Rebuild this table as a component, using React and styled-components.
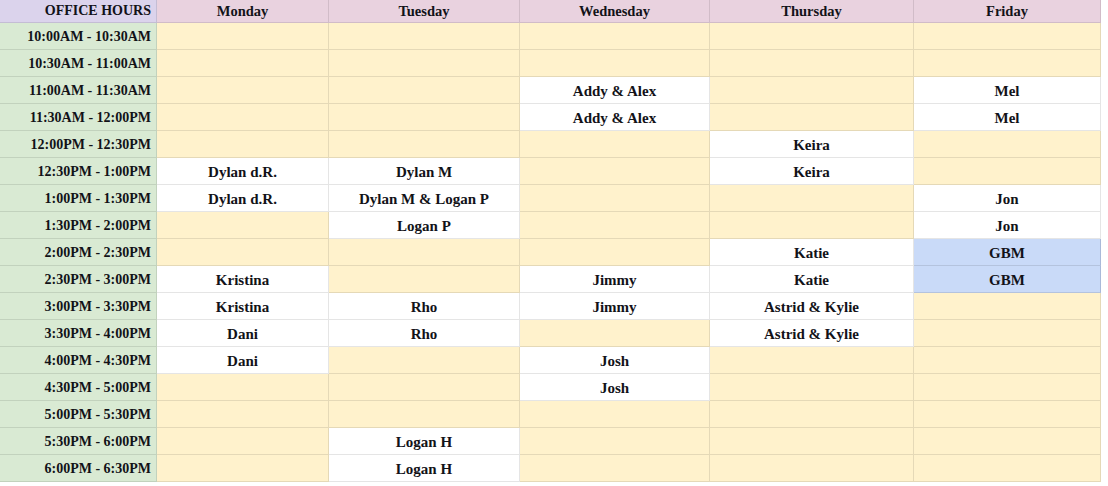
import React from 'react'
import styled, { createGlobalStyle } from 'styled-components'

const GlobalStyle = createGlobalStyle`
  body {
    margin: 0;
    background: #ffffff;
    font-family: 'Liberation Serif', 'Times New Roman', serif;
  }
`;

const Sheet = styled.div`
  display: grid;
  grid-template-columns: 157px 172px 191px 190px 204px 187px;
  grid-template-rows: 23px;
  grid-auto-rows: 27px;
  width: max-content;
  color: #121218;
  font-weight: 700;
  font-size: 14px;
`;

const fills = {
  corner: '#dbd3ec',
  day: '#e9d2df',
  time: '#d9ead3',
  free: '#fff2cc',
  taken: '#ffffff',
  event: '#c9daf8',
};

const Cell = styled.div`
  display: flex;
  align-items: center;
  justify-content: ${p => (p.$align === 'right' ? 'flex-end' : 'center')};
  padding: ${p => (p.$head ? '0' : '2px 0 0')};
  padding-right: ${p => (p.$align === 'right' ? '5px' : '0')};
  font-size: ${p => (p.$align === 'right' ? '14px' : p.$head ? '14.5px' : '15px')};
  background: ${p => fills[p.$kind]};
  border-right: 1px solid ${p => (p.$kind === 'event' ? 'rgba(60,70,110,0.22)' : 'rgba(0,0,0,0.1)')};
  border-bottom: 1px solid rgba(0,0,0,0.1);
  box-sizing: border-box;
  white-space: nowrap;
  line-height: 1;
`;

const days = ['Monday', 'Tuesday', 'Wednesday', 'Thursday', 'Friday'];

const times = [
  '10:00AM - 10:30AM',
  '10:30AM - 11:00AM',
  '11:00AM - 11:30AM',
  '11:30AM - 12:00PM',
  '12:00PM - 12:30PM',
  '12:30PM - 1:00PM',
  '1:00PM - 1:30PM',
  '1:30PM - 2:00PM',
  '2:00PM - 2:30PM',
  '2:30PM - 3:00PM',
  '3:00PM - 3:30PM',
  '3:30PM - 4:00PM',
  '4:00PM - 4:30PM',
  '4:30PM - 5:00PM',
  '5:00PM - 5:30PM',
  '5:30PM - 6:00PM',
  '6:00PM - 6:30PM',
];

// one entry per row: [Mon, Tue, Wed, Thu, Fri]
const slots = [
  ['', '', '', '', ''],
  ['', '', '', '', ''],
  ['', '', 'Addy & Alex', '', 'Mel'],
  ['', '', 'Addy & Alex', '', 'Mel'],
  ['', '', '', 'Keira', ''],
  ['Dylan d.R.', 'Dylan M', '', 'Keira', ''],
  ['Dylan d.R.', 'Dylan M & Logan P', '', '', 'Jon'],
  ['', 'Logan P', '', '', 'Jon'],
  ['', '', '', 'Katie', 'GBM'],
  ['Kristina', '', 'Jimmy', 'Katie', 'GBM'],
  ['Kristina', 'Rho', 'Jimmy', 'Astrid & Kylie', ''],
  ['Dani', 'Rho', '', 'Astrid & Kylie', ''],
  ['Dani', '', 'Josh', '', ''],
  ['', '', 'Josh', '', ''],
  ['', '', '', '', ''],
  ['', 'Logan H', '', '', ''],
  ['', 'Logan H', '', '', ''],
];

const kindOf = name => {
  if (!name) return 'free';
  if (name === 'GBM') return 'event';
  return 'taken';
};

const App = () => {
  return (
    <>
      <GlobalStyle />
      <Sheet>
        <Cell $kind="corner" $align="right" $head>OFFICE HOURS</Cell>
        {days.map(d => (
          <Cell key={d} $kind="day" $head>{d}</Cell>
        ))}
        {times.map((t, r) => (
          <React.Fragment key={t}>
            <Cell $kind="time" $align="right">{t}</Cell>
            {slots[r].map((name, c) => (
              <Cell key={c} $kind={kindOf(name)}>{name}</Cell>
            ))}
          </React.Fragment>
        ))}
      </Sheet>
    </>
  )
}

export default App
